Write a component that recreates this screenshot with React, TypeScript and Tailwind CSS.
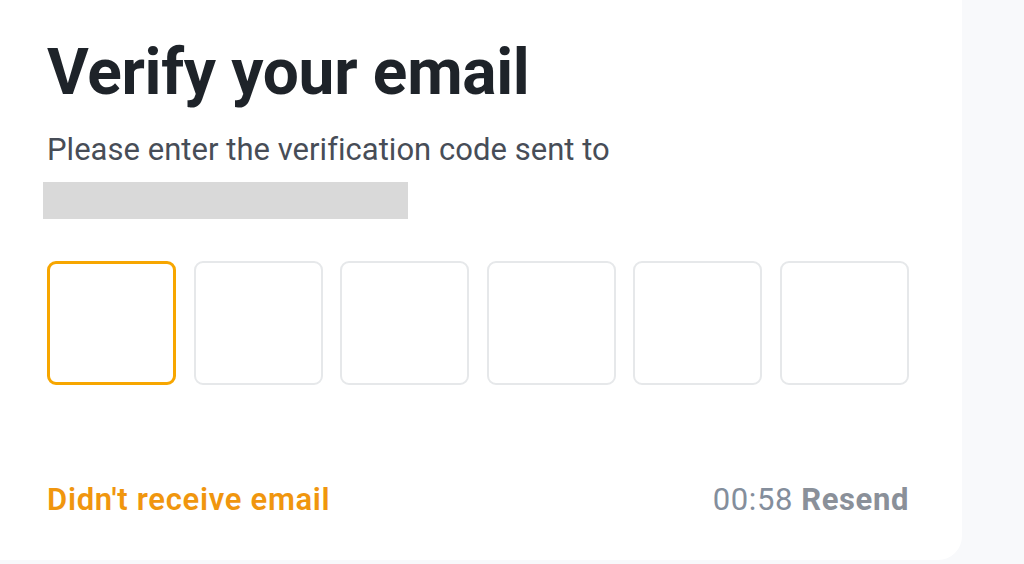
import { useState } from 'react';

const CODE_LENGTH = 6;

export default function App() {
  const [active] = useState(0);

  return (
    <div className="w-[1024px] h-[564px] bg-[#f8f9fb] overflow-hidden" style={{ fontFamily: 'Roboto, "Noto Sans", sans-serif' }}>
      <div className="w-[962px] h-[560px] bg-white rounded-br-[24px] pl-[47px] pr-[53px] flex flex-col">
        {/* Heading */}
        <h1 className="mt-[39px] text-[64px] leading-[68px] font-bold text-[#1e2329] tracking-[-0.3px]">
          Verify your email
        </h1>
        <p className="mt-[25px] text-[31px] leading-[36px] text-[#474d57] tracking-[0.03px]">
          Please enter the verification code sent to
        </p>
        {/* masked address */}
        <div className="mt-[14px] -ml-[4px] w-[365px] h-[37px] bg-[#d9d9d9]" />

        {/* Code inputs */}
        <div className="mt-[42px] flex justify-between">
          {Array.from({ length: CODE_LENGTH }).map((_, i) => (
            <div
              key={i}
              className={
                i === active
                  ? 'w-[129px] h-[124px] rounded-[9px] border-[3px] border-[#f7a600] bg-white'
                  : 'w-[129px] h-[124px] rounded-[9px] border-2 border-[#e6e8ea] bg-white'
              }
            />
          ))}
        </div>

        {/* Footer */}
        <div className="mt-[97px] flex items-center justify-between text-[31px] leading-[36px]">
          <a className="font-semibold text-[#f0960e] cursor-pointer tracking-[0.7px]">Didn't receive email</a>
          <div className="text-[#848e9c] tracking-[0.6px]">
            00:58 <span className="font-bold text-[#8a9099]">Resend</span>
          </div>
        </div>
      </div>
    </div>
  );
}
